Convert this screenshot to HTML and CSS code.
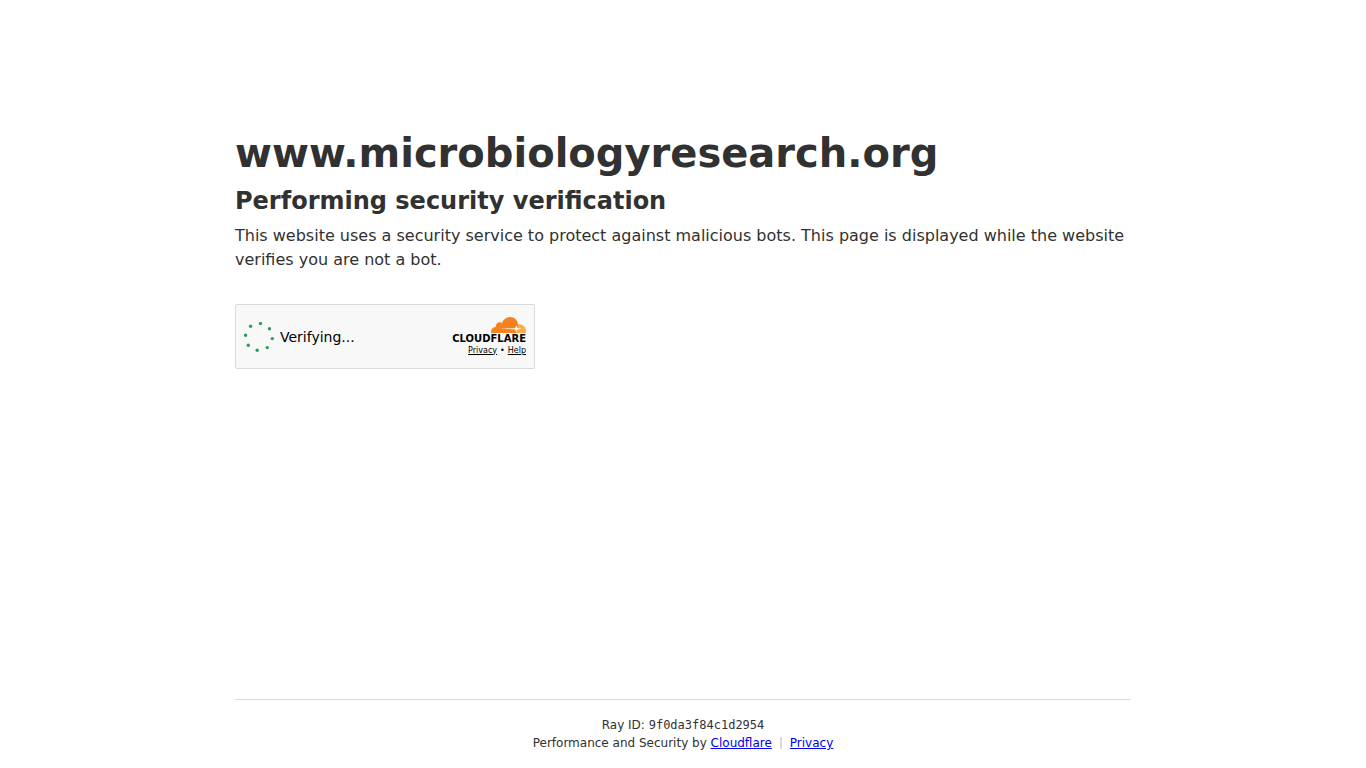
FILE: index.html
```html
<!DOCTYPE html>
<html lang="en">
<head>
<meta charset="utf-8">
<meta name="viewport" content="width=device-width, initial-scale=1">
<title>www.microbiologyresearch.org</title>
<link rel="stylesheet" href="styles.css">
</head>
<body>
<main class="main">
  <h1 class="site">www.microbiologyresearch.org</h1>
  <h2 class="heading">Performing security verification</h2>
  <p class="message">This website uses a security service to protect against malicious bots. This page is displayed while the website verifies you are not a bot.</p>
  <section class="widget" aria-label="Security check">
    <div class="status" role="status">
      <svg class="spinner" viewBox="0 0 30 30" aria-hidden="true">
        <g fill="#2f9a5d">
          <circle cx="16.5" cy="1.6" r="1.7"/>
          <circle cx="25.5" cy="6.7" r="1.7"/>
          <circle cx="28.3" cy="16.6" r="1.7"/>
          <circle cx="23.3" cy="25.6" r="1.7"/>
          <circle cx="13.2" cy="28.3" r="1.7"/>
          <circle cx="4.3" cy="23.3" r="1.7"/>
          <circle cx="1.6" cy="13.3" r="1.7"/>
          <circle cx="6.6" cy="4.3" r="1.7"/>
        </g>
      </svg>
      <span>Verifying...</span>
    </div>
    <div class="brand">
      <svg class="cloud" viewBox="0 0 35 16" aria-hidden="true">
        <path fill="#fbad41" d="M27 7.2C31.500 6.600 35 9.800 35 14.100V15.400C35 15.800 34.800 16 34.400 16H24V11Z"/>
        <path fill="#f6821f" d="M0 15.500C-.2 12.300 1.900 10.200 4.800 10.100C4.200 6.600 7.900 4 11 6C12.300 2.400 15.700 0 19.300 0C23.500 0 27 3.500 27 7.700L25.200 16H.5Q0 16 0 15.500Z"/>
        <path fill="#fff" fill-opacity=".9" d="M9 11.600L23.800 11.200L25.300 8.700L26.600 11.100L31 11.800L26.400 12.400L25.100 15.600L24.200 12.400Z"/>
      </svg>
      <span class="wordmark">CLOUDFLARE</span>
      <div class="links"><a href="#privacy">Privacy</a><span>•</span><a href="#help">Help</a></div>
    </div>
  </section>
</main>
<footer class="footer">
  <div class="footer-inner">
    <div>Ray ID: <code class="ray">9f0da3f84c1d2954</code></div>
    <div class="credits">
      <span>Performance and Security by <a href="#cloudflare">Cloudflare</a></span>
      <span class="divider"></span>
      <a href="#privacy">Privacy</a>
    </div>
  </div>
</footer>
</body>
</html>
```
FILE: styles.css
```css
* {
  box-sizing: border-box;
  margin: 0;
  padding: 0;
}

body {
  display: flex;
  flex-direction: column;
  min-height: 100vh;
  background: #fff;
  color: #313131;
  font-family: "DejaVu Sans", sans-serif;
}

.main {
  flex: 1;
  width: 100%;
  max-width: 960px;
  margin: 0 auto;
  padding: 128px 32px 32px;
}

.site {
  margin-bottom: 8px;
  font-size: 40px;
  line-height: 50px;
}

.heading {
  margin-bottom: 8px;
  font-size: 24px;
  line-height: 30px;
}

.message {
  margin-bottom: 32px;
  font-size: 16px;
  line-height: 24px;
}

.widget {
  display: flex;
  align-items: center;
  justify-content: space-between;
  width: 300px;
  max-width: 100%;
  min-height: 65px;
  padding: 0 8px;
  border: 1px solid #dadada;
  border-radius: 2px;
  background: #f8f8f8;
  color: #000;
}

.status {
  display: flex;
  align-items: center;
  gap: 6px;
  font-size: 14px;
  line-height: 20px;
}

.spinner {
  width: 30px;
  height: 30px;
}

.brand {
  display: flex;
  flex-direction: column;
  align-items: flex-end;
}

.cloud {
  width: 35px;
  height: 16px;
}

.wordmark {
  font-size: 10px;
  font-weight: 700;
  line-height: 12px;
}

.links {
  display: flex;
  gap: 3px;
  font-size: 8px;
  line-height: 12px;
}

.links a {
  color: #000;
}

.footer {
  width: 100%;
  max-width: 960px;
  margin: 0 auto;
  padding: 0 32px;
  font-size: 12px;
  line-height: 18px;
  text-align: center;
}

.footer-inner {
  padding: 16px 0;
  border-top: 1px solid #d9d9d9;
}

.footer a {
  color: #00e;
}

.ray {
  font-family: "DejaVu Sans Mono", monospace;
  font-size: 12px;
}

.credits {
  display: flex;
  flex-wrap: wrap;
  align-items: center;
  justify-content: center;
  gap: 0 8px;
}

.divider {
  width: 2px;
  height: 12px;
  background: #d9d9d9;
}
```
